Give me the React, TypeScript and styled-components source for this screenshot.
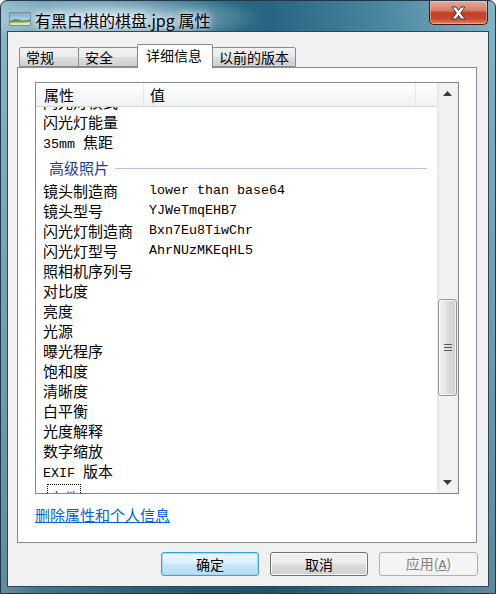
import React from "react";
import styled, { createGlobalStyle } from "styled-components";

const GlobalStyle = createGlobalStyle`
  html, body {
    margin: 0;
    padding: 0;
    background: #ffffff;
  }
  body {
    font-family: "Noto Sans CJK SC", "Noto Sans", sans-serif;
  }
`;

const Window = styled.div`
  box-sizing: border-box;
  width: 496px;
  height: 594px;
  display: flex;
  flex-direction: column;
  border: 1px solid #22384a;
  border-radius: 7px 7px 0 0;
  overflow: hidden;
  background:
    radial-gradient(ellipse 150px 26px at 110px 17px, rgba(240, 250, 255, 0.8), rgba(240, 250, 255, 0) 100%),
    linear-gradient(180deg, rgba(0, 0, 0, 0) 0%, rgba(10, 40, 60, 0.3) 100%),
    linear-gradient(90deg, #8db8c9 0%, #5a95ad 8%, #2f6f8c 35%, #276683 55%, #4b89a3 78%, #84b4c6 100%);
`;

const TitleBar = styled.div`
  height: 31px;
  display: flex;
  align-items: flex-start;
  padding-left: 8px;
`;

const AppIcon = styled.svg`
  margin-top: 11px;
  flex: none;
`;

const Caption = styled.div`
  margin-top: 8px;
  margin-left: 4px;
  font-size: 16px;
  line-height: 22px;
  color: #000;
  text-shadow: 0 0 6px #fff, 0 0 10px rgba(255, 255, 255, 0.9);
`;

const CloseButton = styled.div`
  box-sizing: border-box;
  margin-left: auto;
  margin-right: 7px;
  width: 59px;
  height: 24px;
  display: flex;
  align-items: center;
  justify-content: center;
  border: 1px solid #4a170d;
  border-top: none;
  border-radius: 0 0 5px 5px;
  background: linear-gradient(180deg, #e9a898 0%, #d8806c 40%, #c23c22 52%, #c54a2f 78%, #e08466 100%);
  box-shadow: inset 0 0 0 1px rgba(255, 220, 210, 0.45);
`;

const Body = styled.div`
  flex: 1;
  display: flex;
  padding: 0 7px 7px 7px;
`;

const Client = styled.div`
  flex: 1;
  display: flex;
  flex-direction: column;
  padding-top: 12px;
  background: #f0f0f0;
  box-shadow: 0 0 0 1px #2c4857;
`;

const TabRow = styled.div`
  display: flex;
  align-items: flex-end;
  height: 23px;
  margin-left: 11px;
  position: relative;
  z-index: 1;
`;

const Tab = styled.div<{ $width: number; $active?: boolean }>`
  box-sizing: border-box;
  width: ${(p) => p.$width}px;
  height: ${(p) => (p.$active ? 24 : 20)}px;
  margin-bottom: ${(p) => (p.$active ? -1 : 0)}px;
  & + & {
    margin-left: -1px;
  }
  padding-left: ${(p) => (p.$active ? 8 : 6)}px;
  padding-bottom: ${(p) => (p.$active ? 3 : 0)}px;
  display: flex;
  align-items: center;
  border: 1px solid #898c95;
  border-bottom: ${(p) => (p.$active ? "none" : "1px solid #898c95")};
  border-radius: 2px 2px 0 0;
  font-size: 14px;
  color: #000;
  background: ${(p) =>
    p.$active
      ? "#ffffff"
      : "linear-gradient(180deg, #f2f2f2 0%, #ebebeb 48%, #dddddd 52%, #cfcfcf 100%)"};
  position: relative;
  z-index: ${(p) => (p.$active ? 2 : 1)};
`;

const Panel = styled.div`
  box-sizing: border-box;
  height: 476px;
  margin: 0 11px 0 9px;
  padding: 14px 17px 0 17px;
  display: flex;
  flex-direction: column;
  border: 1px solid #898c95;
  background: #ffffff;
`;

const ListBox = styled.div`
  box-sizing: border-box;
  height: 412px;
  display: flex;
  border: 1px solid #828790;
  background: #ffffff;
`;

const ListMain = styled.div`
  flex: 1;
  display: flex;
  flex-direction: column;
  overflow: hidden;
`;

const Header = styled.div`
  flex: none;
  height: 23px;
  display: flex;
  border-bottom: 1px solid #d5d5d5;
  background: linear-gradient(180deg, #ffffff 0%, #f7f8f9 50%, #f1f2f4 100%);
`;

const HeaderCell = styled.div<{ $width?: number; $pad?: number }>`
  box-sizing: border-box;
  ${(p) => (p.$width ? `width: ${p.$width}px;` : "flex: 1;")}
  padding-left: ${(p) => p.$pad ?? 0}px;
  border-right: ${(p) => (p.$width ? "1px solid #e3e5e8" : "none")};
  font-size: 15px;
  line-height: 23px;
  color: #000;
`;

const Rows = styled.div`
  flex: 1;
  display: flow-root;
  overflow: hidden;
`;

const RowsInner = styled.div`
  margin-top: -15px;
`;

const Row = styled.div`
  display: grid;
  grid-template-columns: 113px 1fr;
  height: 20px;
  line-height: 20px;
  font-size: 15px;
  color: #000;
  white-space: nowrap;
`;

const Label = styled.div`
  padding-left: 7px;
`;

const Value = styled.div`
  font-family: "Liberation Mono", monospace;
  font-size: 13.33px;
`;

const Mono = styled.span`
  font-family: "Liberation Mono", monospace;
  font-size: 13.33px;
`;

const GroupRow = styled.div<{ $top: number }>`
  box-sizing: border-box;
  height: 29px;
  display: flex;
  align-items: flex-start;
  padding: ${(p) => p.$top}px 10px 0 11px;
`;

const GroupText = styled.span<{ $focus?: boolean }>`
  padding: ${(p) => (p.$focus ? "3px 1px 0 1px" : "0 1px")};
  border: 1px ${(p) => (p.$focus ? "dotted #000" : "solid transparent")};
  font-size: 15px;
  line-height: 20px;
  color: #1f3a9c;
`;

const GroupLine = styled.div`
  flex: 1;
  height: 1px;
  margin: 11px 0 0 4px;
  background: #b4c3e7;
`;

const ScrollBar = styled.div`
  flex: none;
  width: 21px;
  display: flex;
  flex-direction: column;
  background: linear-gradient(90deg, #e6e6e6 0%, #f2f2f2 15%, #f2f2f2 85%, #ebebeb 100%);
`;

const ArrowBox = styled.div`
  flex: none;
  height: 21px;
  display: flex;
  align-items: center;
  justify-content: center;
`;

const Track = styled.div`
  flex: 1;
  display: flex;
  flex-direction: column;
`;

const Thumb = styled.div`
  box-sizing: border-box;
  height: 97px;
  margin: 0 1px 0 1px;
  display: flex;
  align-items: center;
  justify-content: center;
  border: 1px solid #979797;
  border-radius: 3px;
  background: linear-gradient(90deg, #f3f3f3 0%, #e4e4e4 40%, #d8d8d8 60%, #d0d0d0 100%);
  box-shadow: inset 0 0 0 1px rgba(255, 255, 255, 0.7);
`;

const Link = styled.a`
  align-self: flex-start;
  margin-top: 11px;
  font-size: 15px;
  line-height: 20px;
  color: #0066cc;
  text-decoration: underline;
  cursor: pointer;
`;

const ButtonRow = styled.div`
  display: flex;
  justify-content: flex-end;
  gap: 11px;
  margin-top: 9px;
  padding-right: 10px;
`;

const Button = styled.button<{ $kind: "default" | "normal" | "disabled"; $width: number }>`
  box-sizing: border-box;
  width: ${(p) => p.$width}px;
  height: 24px;
  padding: 0;
  border-radius: 3px;
  font-family: "Noto Sans CJK SC", "Noto Sans", sans-serif;
  font-size: 14px;
  line-height: 20px;
  color: ${(p) => (p.$kind === "disabled" ? "#838383" : "#000")};
  border: 1px solid
    ${(p) => (p.$kind === "default" ? "#3c9fdc" : p.$kind === "normal" ? "#707070" : "#adb2b5")};
  background: ${(p) =>
    p.$kind === "default"
      ? "linear-gradient(180deg, #eaf6fd 0%, #dcf0fb 48%, #c9e7f8 52%, #b7ddf3 100%)"
      : p.$kind === "normal"
      ? "linear-gradient(180deg, #f2f2f2 0%, #ebebeb 48%, #dddddd 52%, #cfcfcf 100%)"
      : "#f4f4f4"};
  box-shadow: ${(p) =>
    p.$kind === "default"
      ? "inset 0 0 0 1px #9fdaf6"
      : p.$kind === "normal"
      ? "inset 0 0 0 1px #fbfbfb"
      : "none"};
`;

const Accel = styled.span`
  text-decoration: underline;
  font-family: "Liberation Mono", monospace;
  font-size: 13.33px;
`;

type Item =
  | { kind: "row"; label: React.ReactNode; value?: string }
  | { kind: "group"; label: string; focus?: boolean };

const items: Item[] = [
  { kind: "row", label: "闪光灯模式" },
  { kind: "row", label: "闪光灯能量" },
  { kind: "row", label: <><Mono>35mm </Mono>焦距</> },
  { kind: "group", label: "高级照片" },
  { kind: "row", label: "镜头制造商", value: "lower than base64" },
  { kind: "row", label: "镜头型号", value: "YJWeTmqEHB7" },
  { kind: "row", label: "闪光灯制造商", value: "Bxn7Eu8TiwChr" },
  { kind: "row", label: "闪光灯型号", value: "AhrNUzMKEqHL5" },
  { kind: "row", label: "照相机序列号" },
  { kind: "row", label: "对比度" },
  { kind: "row", label: "亮度" },
  { kind: "row", label: "光源" },
  { kind: "row", label: "曝光程序" },
  { kind: "row", label: "饱和度" },
  { kind: "row", label: "清晰度" },
  { kind: "row", label: "白平衡" },
  { kind: "row", label: "光度解释" },
  { kind: "row", label: "数字缩放" },
  { kind: "row", label: <><Mono>EXIF </Mono>版本</> },
  { kind: "group", label: "文件", focus: true },
];

const tabs = [
  { label: "常规", width: 60 },
  { label: "安全", width: 60 },
  { label: "详细信息", width: 76, active: true },
  { label: "以前的版本", width: 84 },
];

// scroll position of the thumb inside the track (px)
const thumbOffset = 195;

export default function App() {
  return (
    <>
      <GlobalStyle />
      <Window>
        <TitleBar>
          <AppIcon width="22" height="14" viewBox="0 0 22 14">
            <defs>
              <linearGradient id="sky" x1="0" y1="0" x2="0" y2="1">
                <stop offset="0" stopColor="#6fa9d6" />
                <stop offset="1" stopColor="#e4f2fb" />
              </linearGradient>
            </defs>
            <rect x="0.5" y="0.5" width="21" height="13" fill="url(#sky)" stroke="#7d8e99" />
            <path d="M1 9 C5 6 9 7 12 8 C15 9 18 8 21 7 L21 13 L1 13 Z" fill="#6f9a4a" />
            <path d="M1 11 C6 10 12 11 21 10 L21 13 L1 13 Z" fill="#d8e6c2" />
          </AppIcon>
          <Caption>有黑白棋的棋盘.jpg 属性</Caption>
          <CloseButton>
            <svg width="17" height="14" viewBox="0 0 17 14">
              <polygon
                points="2,1 6,1 8.5,4.5 11,1 15,1 10.6,7 15,13 11,13 8.5,9.5 6,13 2,13 6.4,7"
                fill="#ffffff"
                stroke="#3b3b3b"
                strokeWidth="1"
                strokeLinejoin="round"
              />
            </svg>
          </CloseButton>
        </TitleBar>
        <Body>
          <Client>
            <TabRow>
              {tabs.map((t) => (
                <Tab key={t.label} $width={t.width} $active={t.active}>
                  {t.label}
                </Tab>
              ))}
            </TabRow>
            <Panel>
              <ListBox>
                <ListMain>
                  <Header>
                    <HeaderCell $width={108} $pad={8}>属性</HeaderCell>
                    <HeaderCell $width={272} $pad={6}>值</HeaderCell>
                    <HeaderCell />
                  </Header>
                  <Rows>
                    <RowsInner>
                      {items.map((it, i) =>
                        it.kind === "row" ? (
                          <Row key={i}>
                            <Label>{it.label}</Label>
                            <Value>{it.value}</Value>
                          </Row>
                        ) : (
                          <GroupRow key={i} $top={it.focus ? 3 : 5}>
                            <GroupText $focus={it.focus}>{it.label}</GroupText>
                            {!it.focus && <GroupLine />}
                          </GroupRow>
                        )
                      )}
                    </RowsInner>
                  </Rows>
                </ListMain>
                <ScrollBar>
                  <ArrowBox>
                    <svg width="9" height="5" viewBox="0 0 9 5">
                      <polygon points="0,5 4.5,0 9,5" fill="#3a3a3a" />
                    </svg>
                  </ArrowBox>
                  <Track>
                    <Thumb style={{ marginTop: thumbOffset }}>
                      <svg width="8" height="7" viewBox="0 0 8 7">
                        <rect x="0" y="0" width="8" height="1" fill="#5a5a5a" />
                        <rect x="0" y="3" width="8" height="1" fill="#5a5a5a" />
                        <rect x="0" y="6" width="8" height="1" fill="#5a5a5a" />
                      </svg>
                    </Thumb>
                  </Track>
                  <ArrowBox>
                    <svg width="9" height="5" viewBox="0 0 9 5">
                      <polygon points="0,0 9,0 4.5,5" fill="#3a3a3a" />
                    </svg>
                  </ArrowBox>
                </ScrollBar>
              </ListBox>
              <Link>删除属性和个人信息</Link>
            </Panel>
            <ButtonRow>
              <Button $kind="default" $width={98}>确定</Button>
              <Button $kind="normal" $width={98}>取消</Button>
              <Button $kind="disabled" $width={99} disabled>
                应用(<Accel>A</Accel>)
              </Button>
            </ButtonRow>
          </Client>
        </Body>
      </Window>
    </>
  );
}
